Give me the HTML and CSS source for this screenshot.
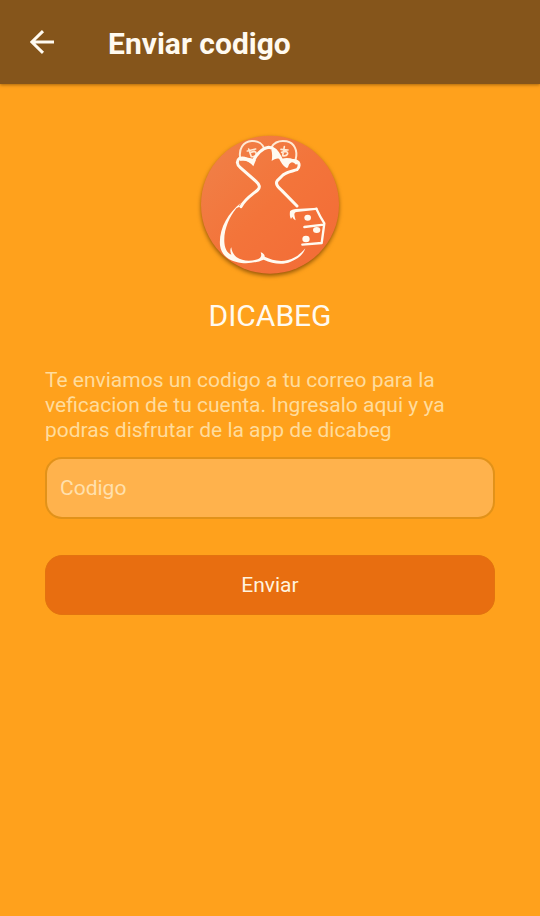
FILE: index.html
```html
<!DOCTYPE html>
<html lang="es">
<head>
<meta charset="utf-8">
<meta name="viewport" content="width=device-width, initial-scale=1">
<title>Enviar codigo</title>
<link rel="stylesheet" href="styles.css">
</head>
<body>
<header class="bar">
  <button class="back" type="button" aria-label="Volver">
    <svg viewBox="0 0 24 24" width="24" height="24" aria-hidden="true"><path d="M24 12H1.500M13 1.200L1.800 12L13 22.800"/></svg>
  </button>
  <h1 class="title">Enviar codigo</h1>
</header>
<main class="content">
  <svg class="logo" viewBox="0 0 480 480" width="160" height="160" aria-hidden="true">
    <defs>
      <linearGradient id="disc" x1="0" y1="0" x2="1" y2="1">
        <stop offset="0" stop-color="#f0824a"/>
        <stop offset=".5" stop-color="#f3743a"/>
        <stop offset="1" stop-color="#f36b36"/>
      </linearGradient>
    </defs>
    <circle class="disc" cx="240" cy="239" r="207" fill="url(#disc)"/>
    <g class="coin">
      <path d="M151 101C145 72 159 50 185 48C205 47 219 57 223 72"/>
      <path d="M245 66C254 51 272 46 290 49C313 54 324 76 317 103"/>
    </g>
    <g class="mark">
      <path d="M176 72L184 95M172 78L197 72M184 95C199 97 203 84 193 79L182 82"/>
      <path d="M283 65L278 92M273 73L294 75M278 92C293 95 298 82 287 79L275 82"/>
    </g>
    <g class="line">
      <path d="M153 245C164 222 189 207 203 195C212 187 208 178 198 169L151 128C140 119 139 107 149 100C162 96 174 102 187 112C197 93 215 70 236 67C254 68 263 82 270 96C278 113 282 119 290 124C293 111 304 104 318 108C332 113 328 129 321 134C307 139 291 140 279 150L262 167C255 176 264 187 275 196L321 243"/>
    </g>
    <g class="fill">
      <path d="M148 100C168 94 186 101 198 104L190 124C181 110 166 105 151 108Z"/>
      <path d="M245 108C247 97 247 85 244 74L252 71C264 82 270 94 275 103C264 98 254 100 245 108Z"/>
      <path d="M276 101C295 96 315 102 329 111L318 119C306 106 294 110 287 127Z"/>
      <path d="M153 233C112 266 86 313 90 361C94 393 119 409 154 414C177 417 202 412 221 404C250 418 280 420 302 410C326 401 339 389 346 370C331 388 316 399 294 405C268 412 243 404 224 395C225 390 219 384 212 382C216 393 213 399 203 403C179 410 157 408 140 397C131 390 125 379 124 367C119 374 121 382 124 389C109 383 104 367 103 351C101 313 118 277 139 250L155 242L146 242Z"/>
      <path d="M300 259C302 255 311 253 318 252L382 248L383 254L320 261C309 263 314 272 317 286C313 284 309 280 307 275L303 282C299 276 299 267 300 259Z"/>
      <ellipse cx="353" cy="278" rx="10" ry="9"/>
      <ellipse cx="380" cy="315" rx="11" ry="9"/>
      <ellipse cx="348" cy="342" rx="11" ry="10"/>
    </g>
    <path class="die" d="M379 251C386 266 394 281 403 295L395 354L337 359M343 306L401 299"/>
  </svg>
  <h2 class="brand">DICABEG</h2>
  <form class="form">
    <label class="hint" for="code">Te enviamos un codigo a tu correo para la veficacion de tu cuenta. Ingresalo aqui y ya podras disfrutar de la app de dicabeg</label>
    <input class="field" id="code" type="text" placeholder="Codigo">
    <button class="send" type="button">Enviar</button>
  </form>
</main>
</body>
</html>
```
FILE: styles.css
```css
* {
  box-sizing: border-box;
}

body {
  margin: 0;
  min-height: 100vh;
  background: #ffa11c;
  color: #fffaf0;
  font-family: Roboto, "Liberation Sans", sans-serif;
}

.bar {
  display: flex;
  align-items: center;
  gap: 54px;
  height: 84px;
  padding: 0 30px;
  background: #85551b;
  box-shadow: 0 1px 3px rgba(110, 65, 0, .6);
}

.back {
  display: flex;
  padding: 0;
  border: 0;
  background: none;
}

.back svg {
  fill: none;
  stroke: #fffaf0;
  stroke-width: 3;
}

.title {
  margin: 0;
  padding-top: 3px;
  font-size: 30px;
  font-weight: 700;
  line-height: 36px;
}

.content {
  display: flex;
  flex-direction: column;
  align-items: center;
  padding: 41px 45px;
}

.logo {
  display: block;
  overflow: visible;
  fill: none;
  stroke-linecap: round;
  stroke-linejoin: round;
}

.disc {
  filter: drop-shadow(0 6px 6px rgba(110, 60, 0, .75));
}

.coin {
  stroke: #ffe9d2;
  stroke-width: 6;
}

.mark {
  stroke: #ffe9d2;
  stroke-width: 5;
}

.line {
  stroke: #fffaf0;
  stroke-width: 9;
}

.fill {
  fill: #fffaf0;
}

.die {
  stroke: #fffaf0;
  stroke-width: 7;
}

.brand {
  margin: 13px 0 34px;
  font-size: 30px;
  font-weight: 400;
  line-height: 36px;
}

.form {
  display: flex;
  flex-direction: column;
  width: 100%;
}

.hint {
  margin-bottom: 14px;
  color: #ffdc9c;
  font-size: 21px;
  line-height: 25px;
}

.field {
  width: 100%;
  height: 62px;
  margin-bottom: 36px;
  padding: 0 13px;
  border: 2px solid #e29219;
  border-radius: 17px;
  background: #ffb24c;
  color: #fffaf0;
  font: inherit;
  font-size: 21px;
}

.field::placeholder {
  color: #ffe0ad;
  opacity: 1;
}

.send {
  height: 60px;
  border: 1px solid #e3730f;
  border-radius: 17px;
  background: #e86e10;
  color: #fff3df;
  font: inherit;
  font-size: 21px;
}
```
